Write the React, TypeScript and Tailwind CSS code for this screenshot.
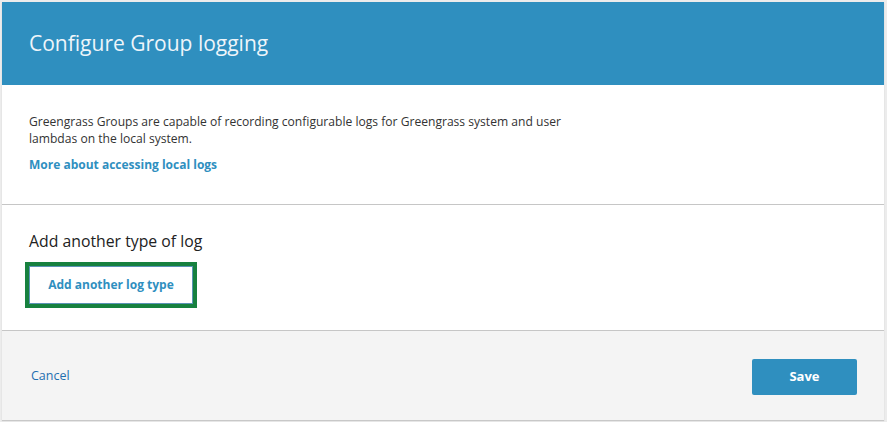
const App = () => {
  return (
    <div className="h-[422px] w-full bg-[#ececec] pl-[2px] pr-[3px] pt-[2px] font-['Open_Sans',sans-serif]">
      <div className="flex h-[418px] flex-col bg-white shadow-[0_1px_1px_rgba(0,0,0,0.15)]">
        <div className="flex h-[83px] items-center bg-[#2f8fbf] px-[27px]">
          <h2 className="text-[21px] text-[#eef5fa]">Configure Group logging</h2>
        </div>
        <div className="h-[120px] border-b border-[#c6c6c6] px-[27px] pt-[28px]">
          <p className="max-w-[560px] text-[12.1px] leading-[17px] text-[#333]">
            Greengrass Groups are capable of recording configurable logs for
            Greengrass system and user lambdas on the local system.
          </p>
          <a
            className="mt-[9px] inline-block text-[12px] font-bold text-[#2f8fbf]"
            href="#"
          >
            More about accessing local logs
          </a>
        </div>
        <div className="h-[126px] border-b border-[#c6c6c6] px-[27px] pt-[25px]">
          <h3 className="text-[15.8px] leading-[22px] text-[#222]">
            Add another type of log
          </h3>
          <button className="mt-[14px] h-[38px] w-[164px] border border-[#5b93b5] bg-white text-[12px] font-bold text-[#2f8fbf] outline-4 outline-[#17813f]">
            Add another log type
          </button>
        </div>
        <div className="flex flex-1 items-center justify-between bg-[#f4f4f4] pl-[29px] pr-[27px] pt-[2px]">
          <a className="text-[12.5px] text-[#1f6fb0]" href="#">
            Cancel
          </a>
          <button className="h-[36px] w-[105px] rounded-[2px] bg-[#2f8fbf] text-[13px] font-bold text-white">
            Save
          </button>
        </div>
      </div>
    </div>
  );
};
export default App;
